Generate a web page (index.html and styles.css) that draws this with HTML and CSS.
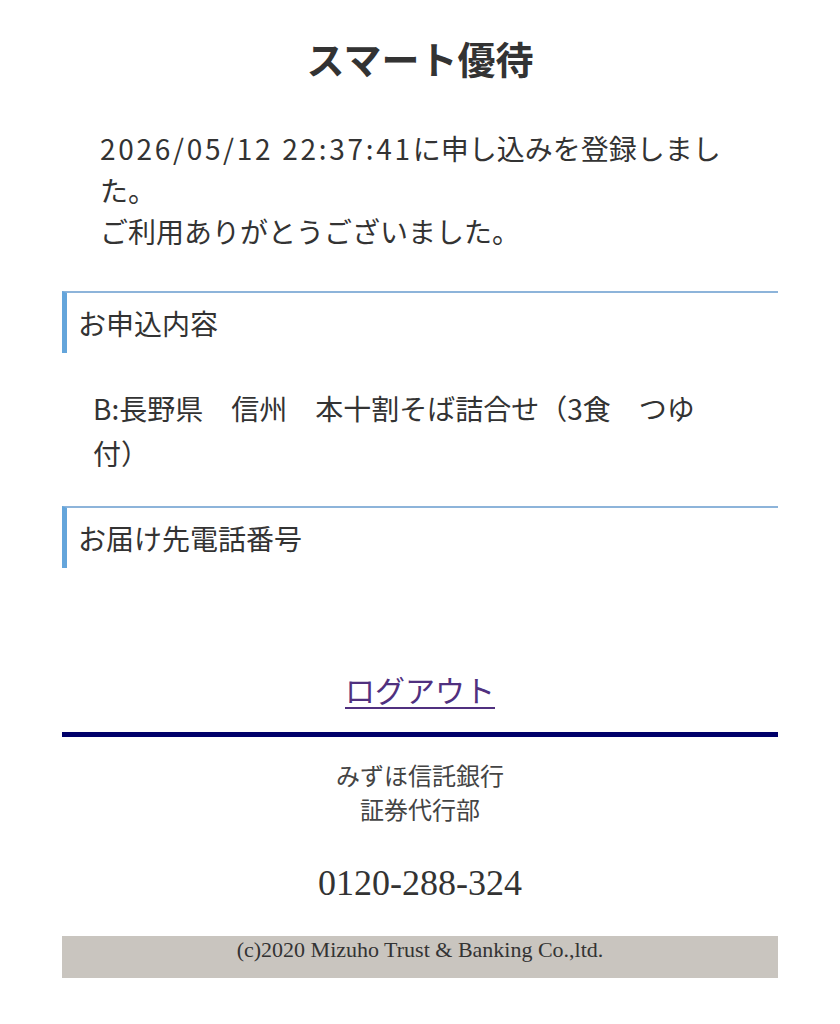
FILE: index.html
```html
<!DOCTYPE html>
<html lang="ja">
<head>
  <meta charset="UTF-8">
  <meta name="viewport" content="width=device-width,initial-scale=1">
  <title>スマート優待</title>
  <link rel="stylesheet" href="styles.css">
</head>
<body>
  <div class="wrap">
    <!-- タイトル -->
    <h1 class="title">スマート優待</h1>

    <!-- 完了メッセージ -->
    <p class="message"><span class="latin">2026/05/12 22:37:41</span>に申し込みを登録しまし<br>た。<br>ご利用ありがとうございました。</p>

    <!-- お申込内容 -->
    <h2 class="sec-head">お申込内容</h2>
    <p class="sec-body">B:長野県　信州　本十割そば詰合せ（3食　つゆ付）</p>

    <!-- 電話番号 -->
    <h2 class="sec-head">お届け先電話番号</h2>
    <p class="sec-body sec-phone">&nbsp;</p>

    <div class="logout"><a href="#" class="logout-link">ログアウト</a></div>

    <!-- フッター -->
    <footer class="footer">
      <div class="footer-line"></div>
      <p class="company">みずほ信託銀行<br>証券代行部</p>
      <p class="tel">0120-288-324</p>
      <p class="copy">(c)2020 Mizuho Trust &amp; Banking Co.,ltd.</p>
    </footer>
  </div>
</body>
</html>
```

FILE: styles.css
```css
* { margin:0; padding:0; box-sizing:border-box; }
html, body {
  background:#fff;
  color:#333;
  font-family:"Noto Sans CJK JP", "Noto Sans", sans-serif;
}
.wrap {
  width:716px;
  margin:0 auto;
  padding-bottom:40px;
}
/* 英数字は少し広め */
.latin { letter-spacing:2.7px; }
/* タイトル */
.title {
  text-align:center;
  font-size:38px; line-height:46px;
  font-weight:700;
  color:#333;
  padding-top:35px;
}
/* メッセージ */
.message {
  font-size:28px; line-height:41.5px;
  padding:47px 20px 0 38px;
  font-weight:400;
}
/* 見出し */
.sec-head {
  margin-top:38px;
  border-top:2px solid #8db4da;
  border-left:5px solid #64a5db;
  padding:9px 0 0 11px;
  height:62px;
  font-size:28px; line-height:42px;
  font-weight:400;
  color:#333;
}
.sec-body {
  font-size:28px; line-height:45px;
  padding:33px 70px 0 31px;
}
.sec-body + .sec-head { margin-top:30px; }
.sec-phone { padding-top:21px; }
/* ログアウト */
.logout {
  text-align:center;
  padding-top:33px;
}
.logout-link {
  font-size:30px; line-height:44px;
  color:#50307f;
  text-decoration:underline;
  text-decoration-thickness:2px;
  text-underline-offset:5px;
}
/* フッター */
.footer-line {
  margin-top:21px;
  height:5px;
  background:#00006a;
}
.company {
  text-align:center;
  font-size:24px; line-height:34px;
  color:#444;
  padding-top:21px;
}
.tel {
  text-align:center;
  font-family:"Liberation Serif", "DejaVu Serif", serif;
  font-size:36px; line-height:44px;
  color:#333;
  padding-top:35px;
}
.copy {
  margin-top:31px;
  background:#c9c5bf;
  height:42px;
  text-align:center;
  font-family:"Liberation Serif", "DejaVu Serif", serif;
  font-size:22px; line-height:28px;
  color:#333;
}
```
